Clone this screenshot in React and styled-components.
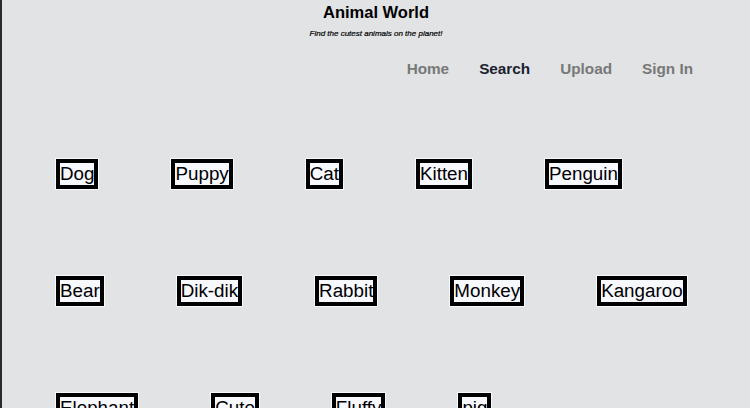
import React from 'react';
import styled, { createGlobalStyle } from 'styled-components';

const GlobalStyle = createGlobalStyle`
  body {
    margin: 0;
    background: #e2e3e5;
    font-family: "Liberation Sans", Arial, sans-serif;
  }
`

const animals = [
    'Dog', 'Puppy', 'Cat', 'Kitten', 'Penguin',
    'Bear', 'Dik-dik', 'Rabbit', 'Monkey', 'Kangaroo',
    'Elephant', 'Cute', 'Fluffy', 'pig',
];

const links = [
    { label: 'Home', active: false },
    { label: 'Search', active: true },
    { label: 'Upload', active: false },
    { label: 'Sign In', active: false },
];

export default function App() {
    return (
        <Page>
            <GlobalStyle />
            <Header>
                <Title>Animal World</Title>
                <Tagline>Find the cutest animals on the planet!</Tagline>
            </Header>
            <Nav>
                {links.map((link) => (
                    <NavLink key={link.label} active={link.active ? 1 : 0}>{link.label}</NavLink>
                ))}
            </Nav>
            <TagList>
                {animals.map((name) => (
                    <Tag key={name}>{name}</Tag>
                ))}
            </TagList>
        </Page>
    )
}

const Page = styled.div`
    min-height: 100vh;
    border-left: 2px solid #2b2b2b;
    box-sizing: border-box;
    overflow: hidden;
`

const Header = styled.header`
    display: flex;
    flex-direction: column;
    align-items: center;
    padding-top: 3px;
`

const Title = styled.h1`
    margin: 0;
    font-size: 16.5px;
    line-height: 19px;
    font-weight: bold;
    color: #000;
`

const Tagline = styled.div`
    margin-top: 7px;
    font-size: 8px;
    line-height: 10px;
    font-style: italic;
    color: #000;
    -webkit-text-stroke: 0.2px #000;
`

const Nav = styled.nav`
    display: flex;
    justify-content: flex-end;
    gap: 30px;
    padding-right: 57px;
    margin-top: 21px;
`

const NavLink = styled.a`
    font-size: 15.3px;
    line-height: 18px;
    font-weight: bold;
    color: ${(p) => (p.active ? '#1c2230' : '#777878')};
    cursor: pointer;
`

const TagList = styled.ul`
    list-style: none;
    margin: 81px 0 0;
    padding: 0 40px 0 54px;
    display: flex;
    flex-wrap: wrap;
    column-gap: 73px;
    row-gap: 87px;
`

const Tag = styled.li`
    font-size: 18.8px;
    line-height: 22px;
    color: #000;
    background: #f8f8ff;
    border: 4px solid #000;
    box-shadow: 0 0 0 1px #f8f8ff;
`
